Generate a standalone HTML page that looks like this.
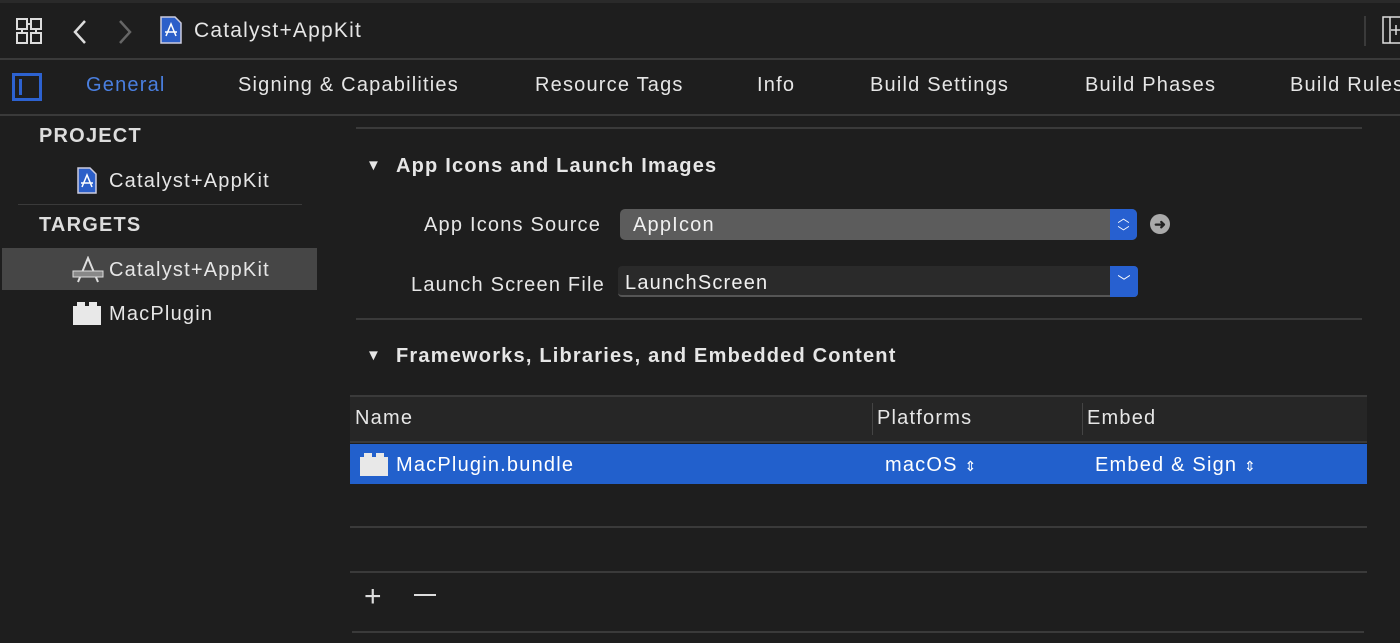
<!DOCTYPE html>
<html><head><style>
*{margin:0;padding:0;box-sizing:border-box}
body{width:1400px;height:643px;overflow:hidden;background:#1e1e1e;font-family:"Liberation Sans",sans-serif;color:#e6e6e6;position:relative;font-size:20px;letter-spacing:1.2px}
.a{position:absolute;white-space:nowrap}
.hl{position:absolute;height:2px;background:#3a3a3a}
</style></head><body>
<div class="a" style="left:0;top:0;width:1400px;height:3px;background:#2a2a2a"></div>
<!-- top bar -->
<svg class="a" style="left:16px;top:18px" width="26" height="26" viewBox="0 0 26 26" fill="none" stroke="#ddd" stroke-width="2"><rect x="1" y="1" width="10" height="10"/><rect x="15" y="1" width="10" height="10"/><rect x="1" y="15" width="10" height="10"/><rect x="15" y="15" width="10" height="10"/><path d="M11 6h4M6 11v4M20 11v4"/></svg>
<svg class="a" style="left:72px;top:19px" width="16" height="26"><path d="M13 2L3 13l10 11" fill="none" stroke="#ddd" stroke-width="2.5"/></svg>
<svg class="a" style="left:117px;top:19px" width="16" height="26"><path d="M3 2l10 11L3 24" fill="none" stroke="#666" stroke-width="2.5"/></svg>
<svg class="a" style="left:160px;top:16px" width="22" height="28"><path d="M1 1h14l6 6v20H1z" fill="#2c5fc9" stroke="#ccd" stroke-width="1.5"/><path d="M6 20l5-12 5 12M5 16h12" stroke="#fff" stroke-width="1.5" fill="none"/></svg>
<div class="a" style="left:194px;top:19px;font-size:21px;color:#e6e6e6">Catalyst+AppKit</div>
<div class="a" style="left:1364px;top:16px;width:2px;height:30px;background:#3a3a3a"></div>
<svg class="a" style="left:1382px;top:16px" width="18" height="28"><rect x="1" y="1" width="20" height="26" fill="none" stroke="#ddd" stroke-width="1.5"/><path d="M8 1v26M9 14h9M14 9v10" stroke="#ddd" stroke-width="1.5"/></svg>
<div class="a" style="left:0;top:58px;width:1400px;height:2px;background:#3a3a3a"></div>
<!-- tabs -->
<div class="a" style="left:12px;top:73px;width:30px;height:28px;border:3px solid #2d62d0;background:#1e1e1e"><div style="position:absolute;left:4px;top:3px;width:3px;height:16px;background:#2d62d0"></div></div>
<div class="a" style="left:86px;top:74px;color:#4a7fe0">General</div>
<div class="a" style="left:238px;top:74px">Signing &amp; Capabilities</div>
<div class="a" style="left:535px;top:74px">Resource Tags</div>
<div class="a" style="left:757px;top:74px">Info</div>
<div class="a" style="left:870px;top:74px">Build Settings</div>
<div class="a" style="left:1085px;top:74px">Build Phases</div>
<div class="a" style="left:1290px;top:74px">Build Rules</div>
<div class="a" style="left:0;top:114px;width:1400px;height:2px;background:#3a3a3a"></div>
<!-- sidebar -->
<div class="a" style="left:39px;top:125px;font-weight:bold;color:#ddd">PROJECT</div>
<svg class="a" style="left:77px;top:167px" width="20" height="27"><path d="M1 1h12l6 6v19H1z" fill="#2c5fc9" stroke="#ccd" stroke-width="1.5"/><path d="M5 20l5-12 5 12M4 16h12" stroke="#fff" stroke-width="1.5" fill="none"/></svg>
<div class="a" style="left:109px;top:170px">Catalyst+AppKit</div>
<div class="a" style="left:18px;top:204px;width:284px;height:1px;background:#3a3a3a"></div>
<div class="a" style="left:39px;top:214px;font-weight:bold;color:#ddd">TARGETS</div>
<div class="a" style="left:2px;top:248px;width:315px;height:42px;background:#464646"></div>
<svg class="a" style="left:72px;top:256px" width="32" height="28"><path d="M6 26L16 2l10 24" fill="none" stroke="#ddd" stroke-width="2"/><rect x="1" y="15" width="30" height="6" fill="#888" stroke="#ddd" stroke-width="1"/></svg>
<div class="a" style="left:109px;top:259px">Catalyst+AppKit</div>
<svg class="a" style="left:72px;top:301px" width="30" height="25"><path d="M1 5v19h28V5h-4V1h-8v4h-4V1H5v4z" fill="#e8e8e8"/></svg>
<div class="a" style="left:109px;top:303px">MacPlugin</div>
<!-- main -->
<div class="hl" style="left:356px;top:127px;width:1006px"></div>
<div class="a" style="left:366px;top:157px;font-size:15px">▼</div>
<div class="a" style="left:396px;top:155px;font-weight:bold">App Icons and Launch Images</div>
<div class="a" style="left:424px;top:214px">App Icons Source</div>
<div class="a" style="left:620px;top:209px;width:517px;height:31px;background:#5c5c5c;border-radius:5px"></div>
<div class="a" style="left:1110px;top:209px;width:27px;height:31px;background:#2760d0;border-radius:0 5px 5px 0;color:#fff;font-size:12px;text-align:center;line-height:14px;padding-top:2px;letter-spacing:0">︿<br>﹀</div>
<div class="a" style="left:633px;top:214px;color:#f0f0f0">AppIcon</div>
<div class="a" style="left:1150px;top:214px;width:20px;height:20px;border-radius:50%;background:#aaa;color:#222;font-size:14px;text-align:center;line-height:20px;font-weight:bold;letter-spacing:0">➜</div>
<div class="a" style="left:411px;top:274px">Launch Screen File</div>
<div class="a" style="left:618px;top:266px;width:520px;height:31px;background:#2a2a2a;border-bottom:2px solid #555;border-radius:4px"></div>
<div class="a" style="left:1110px;top:266px;width:28px;height:31px;background:#2760d0;border-radius:0 4px 4px 0;color:#fff;font-size:13px;text-align:center;line-height:31px;letter-spacing:0">﹀</div>
<div class="a" style="left:625px;top:272px;color:#f0f0f0">LaunchScreen</div>
<div class="hl" style="left:356px;top:318px;width:1006px"></div>
<div class="a" style="left:366px;top:347px;font-size:15px">▼</div>
<div class="a" style="left:396px;top:345px;font-weight:bold">Frameworks, Libraries, and Embedded Content</div>
<!-- table -->
<div class="a" style="left:350px;top:395px;width:1017px;height:48px;background:#262626;border-top:2px solid #3a3a3a;border-bottom:2px solid #3a3a3a"></div>
<div class="a" style="left:872px;top:403px;width:1px;height:32px;background:#444"></div>
<div class="a" style="left:1082px;top:403px;width:1px;height:32px;background:#444"></div>
<div class="a" style="left:355px;top:407px">Name</div>
<div class="a" style="left:877px;top:407px">Platforms</div>
<div class="a" style="left:1087px;top:407px">Embed</div>
<div class="a" style="left:350px;top:444px;width:1017px;height:40px;background:#2260cc"></div>
<svg class="a" style="left:359px;top:452px" width="30" height="25"><path d="M1 5v19h28V5h-4V1h-8v4h-4V1H5v4z" fill="#e8e8e8"/></svg>
<div class="a" style="left:396px;top:454px;color:#fff">MacPlugin.bundle</div>
<div class="a" style="left:885px;top:454px;color:#fff">macOS <span style="font-size:14px">⇕</span></div>
<div class="a" style="left:1095px;top:454px;color:#fff">Embed &amp; Sign <span style="font-size:14px">⇕</span></div>
<div class="hl" style="left:350px;top:526px;width:1017px"></div>
<div class="hl" style="left:350px;top:571px;width:1017px"></div>
<div class="a" style="left:364px;top:580px;font-size:30px;font-weight:300;color:#ddd">+</div>
<div class="a" style="left:414px;top:594px;width:22px;height:2px;background:#ddd"></div>
<div class="hl" style="left:352px;top:631px;width:1012px"></div>
</body></html>
